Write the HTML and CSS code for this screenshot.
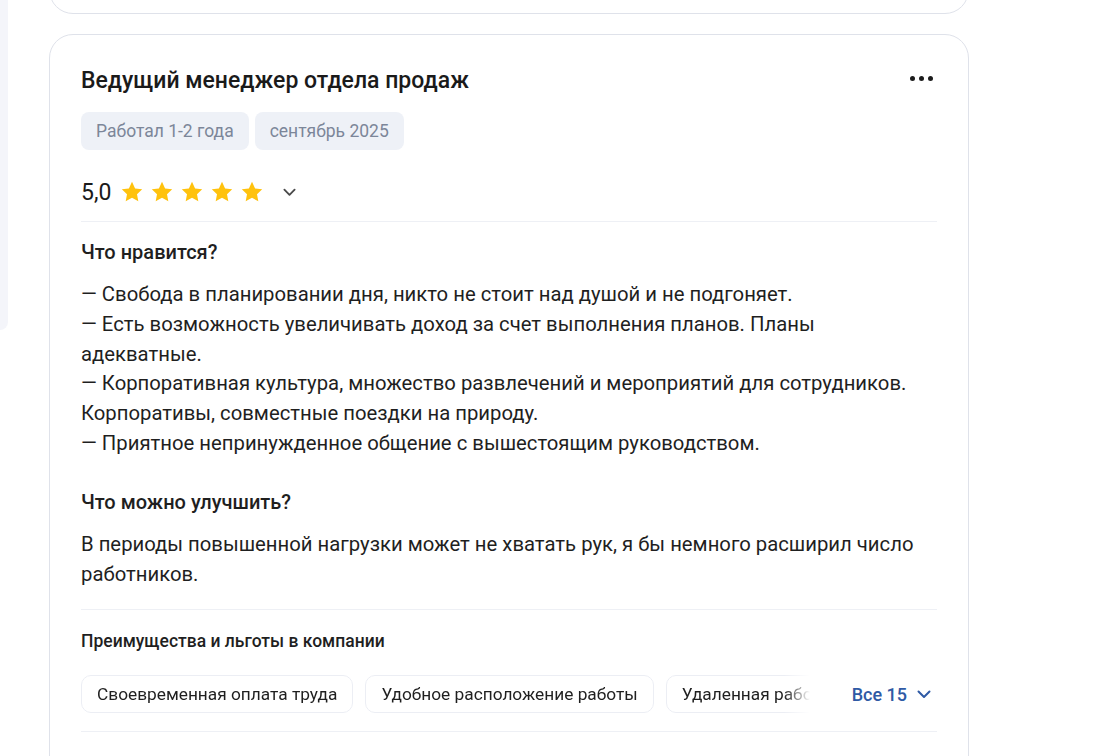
FILE: index.html
```html
<!DOCTYPE html>
<html lang="ru">
<head>
<meta charset="utf-8">
<link rel="stylesheet" href="styles.css">
</head>
<body>
<div class="page">
  <aside class="rail"><div class="rail-panel"></div></aside>
  <main class="feed">
    <div class="card card-prev"></div>
    <article class="card review">
      <header class="review-head">
        <h2 class="review-title">Ведущий менеджер отдела продаж</h2>
        <button class="more" aria-label="Ещё"><span></span><span></span><span></span></button>
      </header>
      <div class="tags">
        <span class="tag">Работал 1-2 года</span>
        <span class="tag">сентябрь 2025</span>
      </div>
      <div class="rating">
        <span class="score">5,0</span>
        <div class="stars">
          <svg viewBox="0 0 24 24"><path d="M12 1.8l3.1 6.6 7.1.9-5.2 4.9 1.3 7.1L12 17.8l-6.3 3.5 1.3-7.1-5.2-4.9 7.1-.9z"/></svg>
          <svg viewBox="0 0 24 24"><path d="M12 1.8l3.1 6.6 7.1.9-5.2 4.9 1.3 7.1L12 17.8l-6.3 3.5 1.3-7.1-5.2-4.9 7.1-.9z"/></svg>
          <svg viewBox="0 0 24 24"><path d="M12 1.8l3.1 6.6 7.1.9-5.2 4.9 1.3 7.1L12 17.8l-6.3 3.5 1.3-7.1-5.2-4.9 7.1-.9z"/></svg>
          <svg viewBox="0 0 24 24"><path d="M12 1.8l3.1 6.6 7.1.9-5.2 4.9 1.3 7.1L12 17.8l-6.3 3.5 1.3-7.1-5.2-4.9 7.1-.9z"/></svg>
          <svg viewBox="0 0 24 24"><path d="M12 1.8l3.1 6.6 7.1.9-5.2 4.9 1.3 7.1L12 17.8l-6.3 3.5 1.3-7.1-5.2-4.9 7.1-.9z"/></svg>
        </div>
        <svg class="chev chev-dark" viewBox="0 0 14 9"><path d="M1.5 1.5L7 7l5.5-5.5"/></svg>
      </div>
      <div class="divider"></div>
      <section class="block">
        <h3 class="block-title">Что нравится?</h3>
        <p class="block-text">— Свобода в планировании дня, никто не стоит над душой и не подгоняет.<br>— Есть возможность увеличивать доход за счет выполнения планов. Планы адекватные.<br>— Корпоративная культура, множество развлечений и мероприятий для сотрудников. Корпоративы, совместные поездки на природу.<br>— Приятное непринужденное общение с вышестоящим руководством.</p>
      </section>
      <section class="block block-next">
        <h3 class="block-title">Что можно улучшить?</h3>
        <p class="block-text">В периоды повышенной нагрузки может не хватать рук, я бы немного расширил число работников.</p>
      </section>
      <div class="divider divider-benefits"></div>
      <section class="benefits">
        <h4 class="benefits-title">Преимущества и льготы в компании</h4>
        <div class="benefits-row">
          <div class="chips">
            <span class="chip">Своевременная оплата труда</span>
            <span class="chip">Удобное расположение работы</span>
            <span class="chip">Удаленная работа</span>
          </div>
          <button class="all">Все 15 <svg class="chev chev-blue" viewBox="0 0 14 9"><path d="M1.5 1.5L7 7l5.5-5.5"/></svg></button>
        </div>
      </section>
      <div class="divider divider-end"></div>
    </article>
  </main>
</div>
</body>
</html>
```

FILE: styles.css
```css
* { box-sizing: border-box; }
html, body { margin: 0; padding: 0; background: #fff; }
body {
  font-family: Roboto, "Noto Sans", "Liberation Sans", sans-serif;
  color: #1f1f1f;
  overflow: hidden;
  height: 756px;
}
.page { display: flex; align-items: flex-start; }
.rail { width: 8px; flex: none; }
.rail-panel {
  height: 330px;
  background: #f4f5fa;
  border-bottom-right-radius: 14px;
}
.feed {
  margin-left: 41px;
  width: 920px;
  display: flex;
  flex-direction: column;
  gap: 20px;
}
.card {
  border: 1px solid #dfe2ea;
  border-radius: 24px;
  background: #fff;
}
.card-prev {
  height: 54px;
  margin-top: -40px;
}
.review { padding: 32px 31px 48px; }
.review-head {
  display: flex;
  align-items: center;
  justify-content: space-between;
}
.review-title {
  margin: 0;
  font-size: 23px;
  line-height: 28px;
  font-weight: 500;
  color: #1a1a1a;
}
.more {
  border: 0;
  background: none;
  padding: 0;
  display: flex;
  gap: 4px;
  margin-right: 4px;
  margin-top: -6px;
  cursor: pointer;
}
.more span {
  width: 5px;
  height: 5px;
  border-radius: 50%;
  background: #1c1c1c;
}
.tags { display: flex; gap: 6px; margin-top: 17px; }
.tag {
  height: 38px;
  display: inline-flex;
  align-items: center;
  padding: 0 15px;
  border-radius: 8px;
  background: #eef1f7;
  color: #7c8699;
  font-size: 17.5px;
}
.rating {
  display: flex;
  align-items: center;
  height: 28px;
  margin-top: 28px;
}
.score {
  font-size: 23px;
  color: #1a1a1a;
  margin-right: 9px;
}
.stars { display: flex; gap: 6px; }
.stars svg { width: 24px; height: 24px; fill: #ffc20e; }
.chev {
  fill: none;
  stroke-width: 2;
  stroke-linecap: round;
  stroke-linejoin: round;
}
.chev-dark { width: 13px; height: 9px; stroke: #4a4a4a; margin-left: 19px; }
.divider { height: 1px; background: #eef0f5; margin-top: 15px; }
.block { margin-top: 18px; }
.block-next { margin-top: 31px; }
.block-title {
  margin: 0;
  font-size: 20px;
  line-height: 24px;
  font-weight: 500;
  color: #1f1f1f;
}
.block-text {
  margin: 16px 0 0;
  font-size: 20.3px;
  line-height: 29.8px;
  color: #1f1f1f;
}
.divider-benefits { margin-top: 20px; }
.benefits { margin-top: 20px; }
.benefits-title {
  margin: 0;
  font-size: 17.5px;
  line-height: 22px;
  font-weight: 500;
  color: #1f1f1f;
}
.benefits-row {
  display: flex;
  align-items: center;
  margin-top: 23px;
}
.chips {
  flex: 1;
  min-width: 0;
  display: flex;
  gap: 12px;
  overflow: hidden;
  -webkit-mask-image: linear-gradient(to right, #000 calc(100% - 26px), transparent 100%);
  mask-image: linear-gradient(to right, #000 calc(100% - 26px), transparent 100%);
}
.chip {
  flex: none;
  height: 38px;
  display: inline-flex;
  align-items: center;
  padding: 0 15px;
  border: 1px solid #eceef4;
  border-radius: 10px;
  font-size: 17.3px;
  color: #1f1f1f;
  white-space: nowrap;
}
.all {
  flex: none;
  margin-left: 42px;
  margin-right: 6px;
  border: 0;
  background: none;
  padding: 0;
  display: flex;
  align-items: center;
  gap: 10px;
  font-family: inherit;
  font-size: 18px;
  font-weight: 500;
  color: #2f5aa5;
  cursor: pointer;
}
.chev-blue { width: 14px; height: 9px; stroke: #2f5aa5; }
.divider-end { margin-top: 18px; }
```
